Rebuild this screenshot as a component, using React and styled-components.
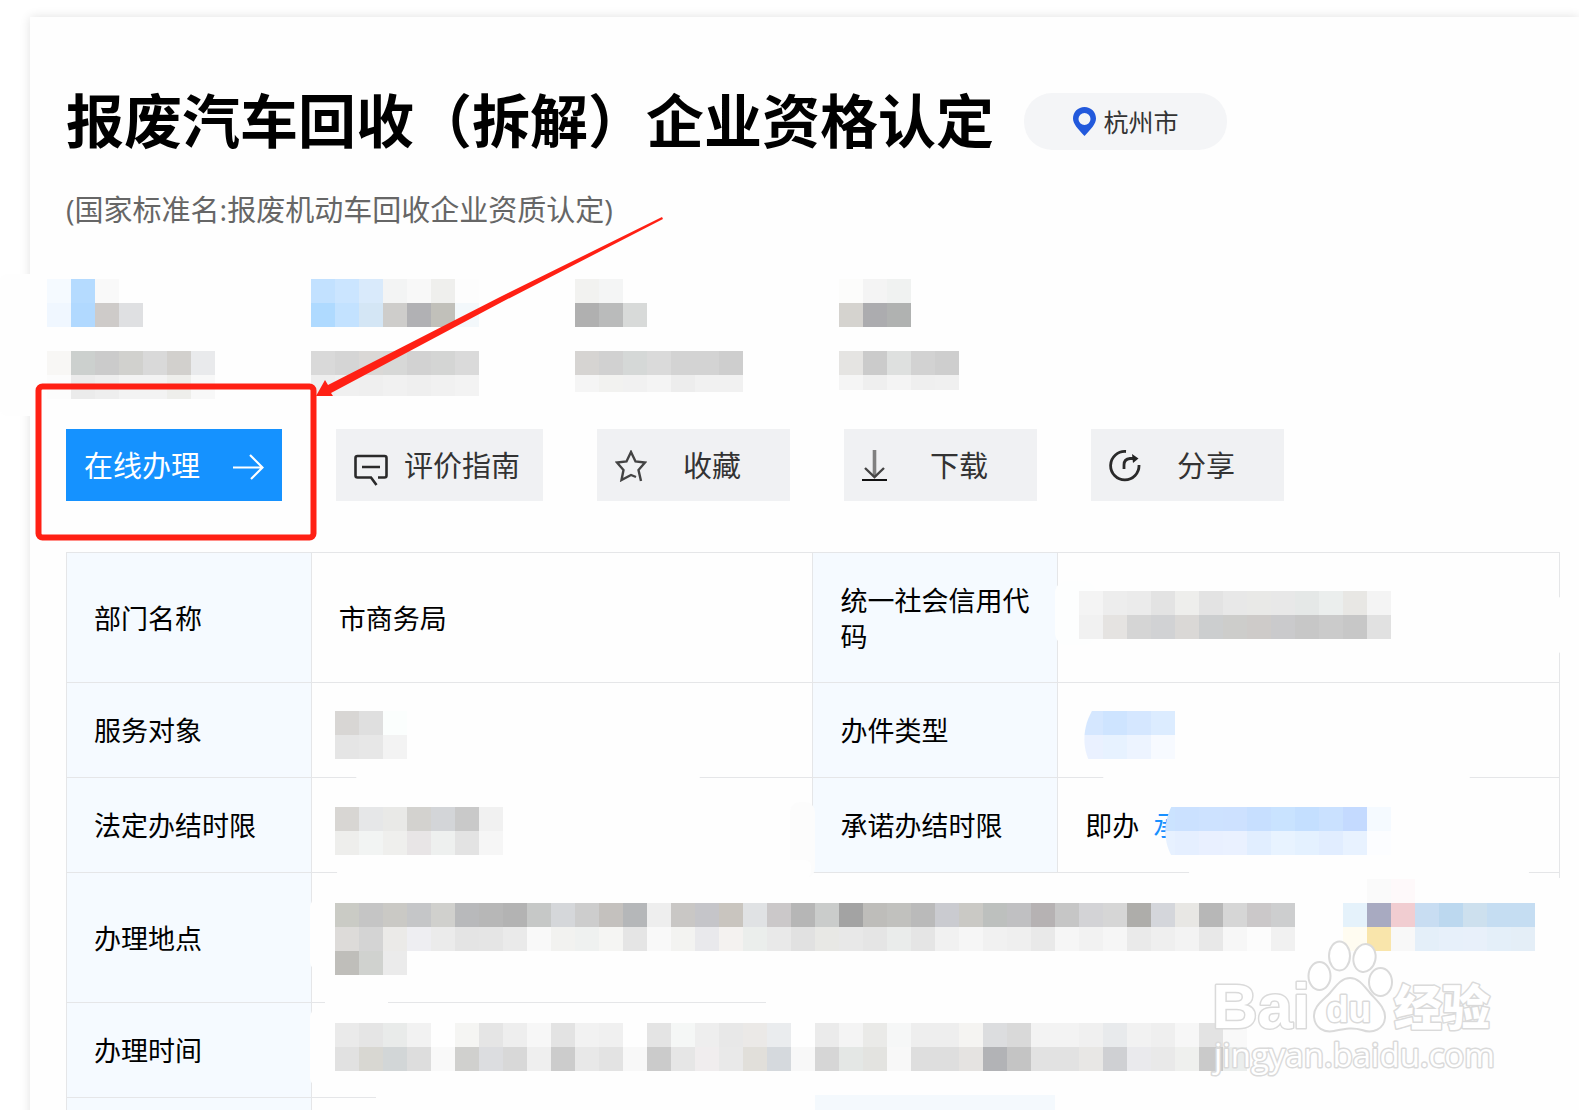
import React from 'react';
import styled, { createGlobalStyle } from 'styled-components';

const GlobalStyle = createGlobalStyle`
  * {
    box-sizing: border-box;
  }
  body {
    margin: 0;
    background: #fff;
    color: #000;
    font-family: 'Open Sans', 'Noto Sans CJK SC', sans-serif;
  }
`;

const Page = styled.div`
  position: relative;
  height: 100vh;
  padding: 17px 0 0 30px;
  overflow: hidden;
`;
const Card = styled.main`
  min-height: 100%;
  padding: 66px 19px 0 36px;
  background: #fefefe;
  box-shadow: 0 0 10px rgba(0, 0, 0, 0.12);
`;
const Header = styled.header`
  display: flex;
  align-items: center;
  gap: 30px;
`;
const Title = styled.h1`
  margin: 0;
  font-size: 58px;
  line-height: 76px;
  font-weight: 700;
  white-space: nowrap;
`;
const City = styled.button`
  display: flex;
  align-items: center;
  justify-content: center;
  gap: 8px;
  width: 203px;
  height: 57px;
  padding: 0;
  border: none;
  border-radius: 28px;
  background: #f4f5f7;
  color: #333;
  font-family: inherit;
  font-size: 25px;
  cursor: pointer;
`;
const SubTitle = styled.p`
  margin: 31px 0 0;
  color: #666;
  font-size: 29px;
  line-height: 40px;
`;
const Stats = styled.section`
  display: flex;
  height: 120px;
  margin: 49px 0 0 -19px;
`;
const Stat = styled.div`
  display: flex;
  flex-direction: column;
  gap: 24px;
  width: 264px;
`;
const Actions = styled.div`
  display: flex;
  gap: 54px;
  margin-top: 30px;
`;
const Action = styled.button`
  display: flex;
  align-items: center;
  gap: ${({ $gap }) => $gap || 36}px;
  height: 72px;
  padding: 2px ${({ $end }) => $end || 49}px 0 18px;
  border: none;
  background: ${({ $primary }) => ($primary ? '#1592ff' : '#f0f1f3')};
  color: ${({ $primary }) => ($primary ? '#fff' : '#333')};
  font-family: inherit;
  font-size: 29px;
  line-height: 40px;
  white-space: nowrap;
  cursor: pointer;
`;
const Table = styled.table`
  width: 100%;
  margin-top: 51px;
  border-collapse: collapse;
  table-layout: fixed;
  font-size: 27px;
  line-height: 36px;
  text-align: left;
`;
const LabelCol = styled.col`
  width: 16.4%;
`;
const ValueCol = styled.col`
  width: 33.6%;
`;
const Row = styled.tr`
  height: ${({ $tall }) => ($tall ? 130 : 95)}px;
`;
const Label = styled.th`
  padding: 2px 27px 0;
  border: 1px solid #e5e6e8;
  background: #f5faff;
  font-weight: 400;
`;
const Value = styled.td`
  padding: 2px 27px 0;
  border: 1px solid #e5e6e8;
`;
const Link = styled.a`
  margin-left: 14px;
  color: #1890ff;
  text-decoration: none;
`;
const Overlay = styled.svg`
  position: absolute;
  top: 0;
  left: 0;
  width: 1579px;
  height: 1110px;
  pointer-events: none;
`;
const MarkText = styled.text`
  fill: #fff;
  stroke: #dadada;
  stroke-width: 3px;
  stroke-linejoin: round;
  paint-order: stroke;
  font-family: ${({ $family }) => $family || "'Liberation Sans'"}, sans-serif;
  font-size: ${({ $size }) => $size}px;
  font-weight: ${({ $weight }) => $weight || 700};
`;

const CELL = 24;

// rows of hex colours, "-" leaves the cell empty
const Pixels = ({ rows, x = 0, y = 0 }) =>
  rows.map((row, r) =>
    row
      .split(' ')
      .map((color, c) =>
        color === '-' ? null : (
          <rect
            key={`${r}-${c}`}
            x={x + c * CELL}
            y={y + r * CELL}
            width={CELL}
            height={CELL}
            fill={`#${color}`}
            shapeRendering='crispEdges'
          />
        )
      )
  );

const Mosaic = ({ rows, height = 48 }) => (
  <svg
    width={rows[0].split(' ').length * CELL}
    height={height}
    aria-hidden='true'
  >
    <Pixels rows={rows} />
  </svg>
);

const stats = [
  {
    value: ['f5faff b5dbff f9f9f9 -', 'f0f7ff b1d9ff cecbc9 dfe0e2'],
    name: [
      'f8f7f5 ccd0ce cbcbcb d1d1ce d9d9d9 d2d0cd e9eaec',
      'fcfcfc ebebeb eeeeee f3f3f3 f3f3f3 eeeeeb f8f8f8',
    ],
  },
  {
    value: [
      'c2e1ff cbe5ff d9eafb f3f4f4 f8f8f8 efefed fdfdfd',
      'afdaff c3e2ff d4e6f5 cecdcb b1b1b4 c1c0ba f3f8fb',
    ],
    name: [
      'd9d9d9 d5d5d5 dad8d6 d7d8d7 d2d2d2 d4d5d4 dadada',
      'eeeeee f0f0f0 efefef f1f1f1 efefef f1f1f1 f3f3f3',
    ],
    height: 45,
  },
  {
    value: ['f2f2f0 f4f5f5 -', 'b0b0b0 babbbb d8dad9'],
    name: [
      'd6d4d2 d1d1d1 d5d8d7 dadada d3d3d3 d3d3d3 cecece',
      'f5f5f5 f2f2f0 f1f1f1 f4f4f4 ededed f1f1f1 f1f1f1',
    ],
    height: 41,
  },
  {
    value: ['fcfcfb f4f4f4 f0f2f1', 'd5d3cf acacaf b0b2b1'],
    name: [
      'e5e4e2 cbcbcb dee0df d2d2d2 cecece',
      'f5f5f5 efefef f4f4f4 efefef f0f0f0',
    ],
    height: 39,
  },
];

const creditCode = [
  'f4f4f4 ededed ebebeb e3e3e3 eeeeec e3e3e3 e8e8e8 e9e9e7 e8e8e8 e5e8e7 ebeeed e8e7e4 f4f4f4',
  'f1f1f1 e5e3e1 d5d5d5 d1d2d4 dad8d6 cccecf cdcdcb cecbc9 cacacc c7c7c7 cbcbcb c7c7c7 e1e1e1',
];
const target = ['d8d6d4 dfdfdf fbfefd', 'e5e5e5 e7e7e7 f3f3f3'];
const limit = [
  'd8d6d3 e6e7e8 e9e9e7 d3d2cf d3d5d8 c9c9c9 f1f1f1',
  'eeeeec f2f4f3 efefed e8e5e6 eef0ef e3e3e3 f6f6f6',
];
const kind = ['d5e7ff cee4ff d5e7ff dcecff', 'eaf1ff e7f2ff edf4ff f7faff'];
const promise = [
  'cbe3ff cbe1ff cde2ff cde1ff c7dfff c9e3ff c4dfff cae1ff c4daff f5faff',
  'e7f1ff e5efff e9f0ff eaf1ff e1eeff e8f3ff e4f1ff e1edff e8f2ff fcfdff',
];
const address = [
  'cacbc5 c5c5c5 cac9c5 c5c6c8 d0d0cd b8b9bb b7b7b7 b3b3b3 c6c8c7 d5d7da cdcdcd c4c1be b5b7b9 eeeeee c9c7c5 c5c5c9 c9c5bf e0e2e4 cbc8c9 b6b6b6 cacccb a3a3a3 bebdba c1c1be bababa cacbd0 cac9c5 bdc0be c0c0c2 b6b2b3 c6c6c6 d3d3d6 d6d6d6 aeadaa d4d6db e8e7e4 b7b7b7 d6d6d6 cbc8c9 cdcecf',
  'dddbd9 d4d4d4 ebeae8 eeeef2 ebebeb e4e4e4 e5e5e5 eaeaea f9f9f9 f2f2f0 eff1f0 f5f5f3 e5e5e5 f9f9f9 f3f3f1 e9e9ec f4f2f0 ebeeec e9e9e9 e1e1e1 e8e8e5 e8e8e8 e5e5e5 eaeceb e5e5e5 f1f1f1 f6f6f6 f1f1f1 efefef e9e9e9 f6f6f6 f2f2f2 f6f6f6 eaeaea efefef f3f3f3 e8e8e8 f7f7f7 fcfcfc f1f1f1',
  'bfbeba d0d2cf ebebeb',
];
const mapLink = [
  '- fafafa fef9fa - - - - -',
  'e5f2fb a8aac1 f1cdd1 c8ddf2 bcd8ef cde0ee c5ddf2 c5ddf2',
  'fffcf1 f9e5ab f8f8f8 e4eff9 e7f0fa e8f0fa e4eff9 e4eef7',
];
const hours = [
  'eaeaea e5e5e5 e9ebea f2f2f2 - f5f5f3 e5e5e5 eeeeee f7f7f7 e3e3e3 f2f2f2 f0f0f0 - e4e4e4 f5f7f6 eeeeee e8e8e8 ebe9e7 eaecee - ebebeb f4f4f4 eaeae8 f6f7f7 eeeeee eeeeee f5f4f2 dcdddf d9d9d9 f3f3f3 f3f3f3 f0f0f0 e8eaec f2f2f2 efefef f7f7f7 e3e3e3 f9f9f9',
  'e1e1e1 d8d7d2 d2d6d7 dddddd f9f9f9 d0d0ce dcdde0 d8d8d8 efefef cccccc e8e8e8 e3e3e3 f8f8f8 cbcbcb e6e6e6 f0edee e9e9e9 e1dfda d5d9dd f8f8f8 d6d6d6 e4e7e5 e3e3e0 f8f8f8 dedede dedede e5e3e1 b2b3b6 c4c4c4 e2e2e2 e2e2e2 e8e7e5 cfd0d3 eaeaed e9e9e9 eff0ee cacaca ebeeed',
];

const PinIcon = () => (
  <svg width='23' height='29' viewBox='0 0 23 29' aria-hidden='true'>
    <path
      fill='#2259dc'
      fillRule='evenodd'
      d='M11.500 0C5 0 0 5 0 11.500C0 17 5 22 11.500 29C18 22 23 17 23 11.500C23 5 18 0 11.500 0ZM11.500 6A6 6 0 1 1 11.500 18A6 6 0 1 1 11.500 6Z'
    />
  </svg>
);
const ArrowIcon = () => (
  <svg width='31' height='28' viewBox='0 -2 31 28' fill='none' aria-hidden='true'>
    <path stroke='#fff' strokeWidth='2.200' d='M0 13.500H30M17 1L29.500 13.500L18 25' />
  </svg>
);
const CommentIcon = () => (
  <svg width='34' height='40' viewBox='0 -8 34 40' fill='none' aria-hidden='true'>
    <path
      stroke='#2a2a2a'
      strokeWidth='2.600'
      d='M22.500 31L17 23.500H3.500Q1.500 23.500 1.500 21.500V4Q1.500 2 3.500 2H30.500Q32.500 2 32.500 4V21.500Q32.500 23.500 30.500 23.500H24M8 13H26'
    />
  </svg>
);
const StarIcon = () => (
  <svg width='32' height='32' viewBox='0 0 32 32' fill='none' aria-hidden='true'>
    <path
      stroke='#444'
      strokeWidth='2.400'
      d='M21 27L16 25L6.500 30L8.500 20L2 12.500L11.500 11.500L16 2L20.500 11.500L30 12.500L23.500 20L26 31'
    />
  </svg>
);
const DownloadIcon = () => (
  <svg width='32' height='32' viewBox='0 0 32 32' fill='none' aria-hidden='true'>
    <path stroke='#808080' strokeWidth='3.600' d='M12.500 0V27' />
    <path stroke='#444' strokeWidth='2.400' d='M3 18L12.500 27L22 18' />
    <path stroke='#111' strokeWidth='2' d='M0 30H25' />
  </svg>
);
const ShareIcon = () => (
  <svg width='32' height='32' viewBox='0 0 32 32' fill='none' aria-hidden='true'>
    <path stroke='#2a2a2a' strokeWidth='2.800' d='M17 1.500A14.200 14.200 0 1 0 30 15' />
    <path stroke='#2a2a2a' strokeWidth='2.800' d='M15 19V15Q15 9 21 8.500H25' />
    <path fill='#222' d='M23 4L29.500 8.500L24 13Z' />
  </svg>
);

const Watermark = () => (
  <g>
    <MarkText x='1212' y='1028' $size={63}>
      Bai
    </MarkText>
    <g fill='#fff' stroke='#dadada' strokeWidth='2'>
      <ellipse cx='1319.500' cy='976' rx='11' ry='14' />
      <ellipse cx='1339.500' cy='956' rx='10.500' ry='14.500' />
      <ellipse cx='1364.500' cy='958' rx='11' ry='14' transform='rotate(12 1364.500 958)' />
      <ellipse cx='1380.500' cy='982' rx='11.500' ry='14' />
      <path d='M1350 978C1341 978 1336 986 1330 993C1324 1000 1313 1006 1314 1017C1315 1028 1324 1033 1334 1031C1344 1029 1352 1027 1362 1030C1373 1034 1384 1029 1385 1018C1386 1008 1376 1000 1370 993C1364 986 1359 978 1350 978Z' />
    </g>
    <MarkText x='1326' y='1022' $size={37}>
      du
    </MarkText>
    <MarkText x='1394' y='1025' $size={48} $weight={900} $family="'Noto Sans CJK SC'">
      经验
    </MarkText>
    <MarkText x='1214' y='1067' $size={33} $weight={400} $family="'Open Sans'">
      jingyan.baidu.com
    </MarkText>
  </g>
);

const Annotations = () => (
  <Overlay viewBox='0 0 1579 1110'>
    <defs>
      <clipPath id='kindClip'>
        <path d='M1175 700V770H1095C1080 752 1082 725 1094 708Z' />
      </clipPath>
      <clipPath id='promiseClip'>
        <path d='M1400 800V860H1174C1162 842 1163 820 1174 802Z' />
      </clipPath>
    </defs>
    {/* smudged areas that hide parts of the grid lines */}
    <g fill='#fefefe'>
      <rect x='0' y='274' width='47' height='142' rx='8' />
      <rect x='1055' y='581' width='40' height='64' rx='12' fill='#fdfefe' />
      <rect x='1500' y='597' width='68' height='56' rx='10' />
      <rect x='356' y='762' width='344' height='20' rx='6' />
      <rect x='1103' y='762' width='367' height='20' rx='6' />
      <rect x='790' y='802' width='25' height='76' rx='10' fill='#fcfcfc' />
      <rect x='337' y='860' width='474' height='18' rx='6' />
      <rect x='1189' y='860' width='340' height='18' rx='6' />
      <rect x='310' y='899' width='25' height='71' rx='8' />
      <rect x='310' y='1009' width='25' height='77' rx='8' />
      <rect x='325' y='996' width='63' height='14' rx='4' />
      <rect x='766' y='990' width='790' height='20' />
      <rect x='1548' y='878' width='31' height='232' />
      <rect x='376' y='1090' width='1200' height='20' />
      <rect x='815' y='1095' width='240' height='15' fill='#f4f9fd' />
    </g>
    <Pixels rows={creditCode} x={1079} y={591} />
    <Pixels rows={target} x={335} y={711} />
    <g clipPath='url(#kindClip)'>
      <Pixels rows={kind} x={1079} y={711} />
    </g>
    <Pixels rows={limit} x={335} y={807} />
    <g clipPath='url(#promiseClip)'>
      <Pixels rows={promise} x={1151} y={807} />
    </g>
    <Pixels rows={address} x={335} y={903} />
    <Pixels rows={mapLink} x={1343} y={879} />
    <Pixels rows={hours} x={335} y={1023} />
    <rect
      x='38.500'
      y='386.500'
      width='275'
      height='151'
      rx='4'
      fill='none'
      stroke='#ff2014'
      strokeWidth='6'
    />
    <path
      fill='#ff2014'
      d='M316 396L325 380L328 385L500 297L662 217L663 219L500 303L331 393L333 396Z'
    />
    <Watermark />
  </Overlay>
);

const App = () => (
  <>
    <GlobalStyle />
    <Page>
      <Card>
        <Header>
          <Title>报废汽车回收（拆解）企业资格认定</Title>
          <City type='button'>
            <PinIcon />
            杭州市
          </City>
        </Header>
        <SubTitle>(国家标准名:报废机动车回收企业资质认定)</SubTitle>
        <Stats>
          {stats.map((stat, i) => (
            <Stat key={i}>
              <Mosaic rows={stat.value} />
              <Mosaic rows={stat.name} height={stat.height} />
            </Stat>
          ))}
        </Stats>
        <Actions>
          <Action type='button' $primary $gap={33} $end={18}>
            在线办理
            <ArrowIcon />
          </Action>
          <Action type='button' $gap={16} $end={23}>
            <CommentIcon />
            评价指南
          </Action>
          <Action type='button'>
            <StarIcon />
            收藏
          </Action>
          <Action type='button'>
            <DownloadIcon />
            下载
          </Action>
          <Action type='button'>
            <ShareIcon />
            分享
          </Action>
        </Actions>
        <Table>
          <colgroup>
            <LabelCol />
            <ValueCol />
            <LabelCol />
            <ValueCol />
          </colgroup>
          <tbody>
            <Row $tall>
              <Label scope='row'>部门名称</Label>
              <Value>市商务局</Value>
              <Label scope='row'>统一社会信用代码</Label>
              <Value />
            </Row>
            <Row>
              <Label scope='row'>服务对象</Label>
              <Value />
              <Label scope='row'>办件类型</Label>
              <Value />
            </Row>
            <Row>
              <Label scope='row'>法定办结时限</Label>
              <Value />
              <Label scope='row'>承诺办结时限</Label>
              <Value>
                即办
                <Link href='#promise'>承</Link>
              </Value>
            </Row>
            <Row $tall>
              <Label scope='row'>办理地点</Label>
              <Value colSpan={3} />
            </Row>
            <Row>
              <Label scope='row'>办理时间</Label>
              <Value colSpan={3} />
            </Row>
            <Row>
              <Label />
              <Value colSpan={3} />
            </Row>
          </tbody>
        </Table>
      </Card>
      <Annotations />
    </Page>
  </>
);

export default App;
